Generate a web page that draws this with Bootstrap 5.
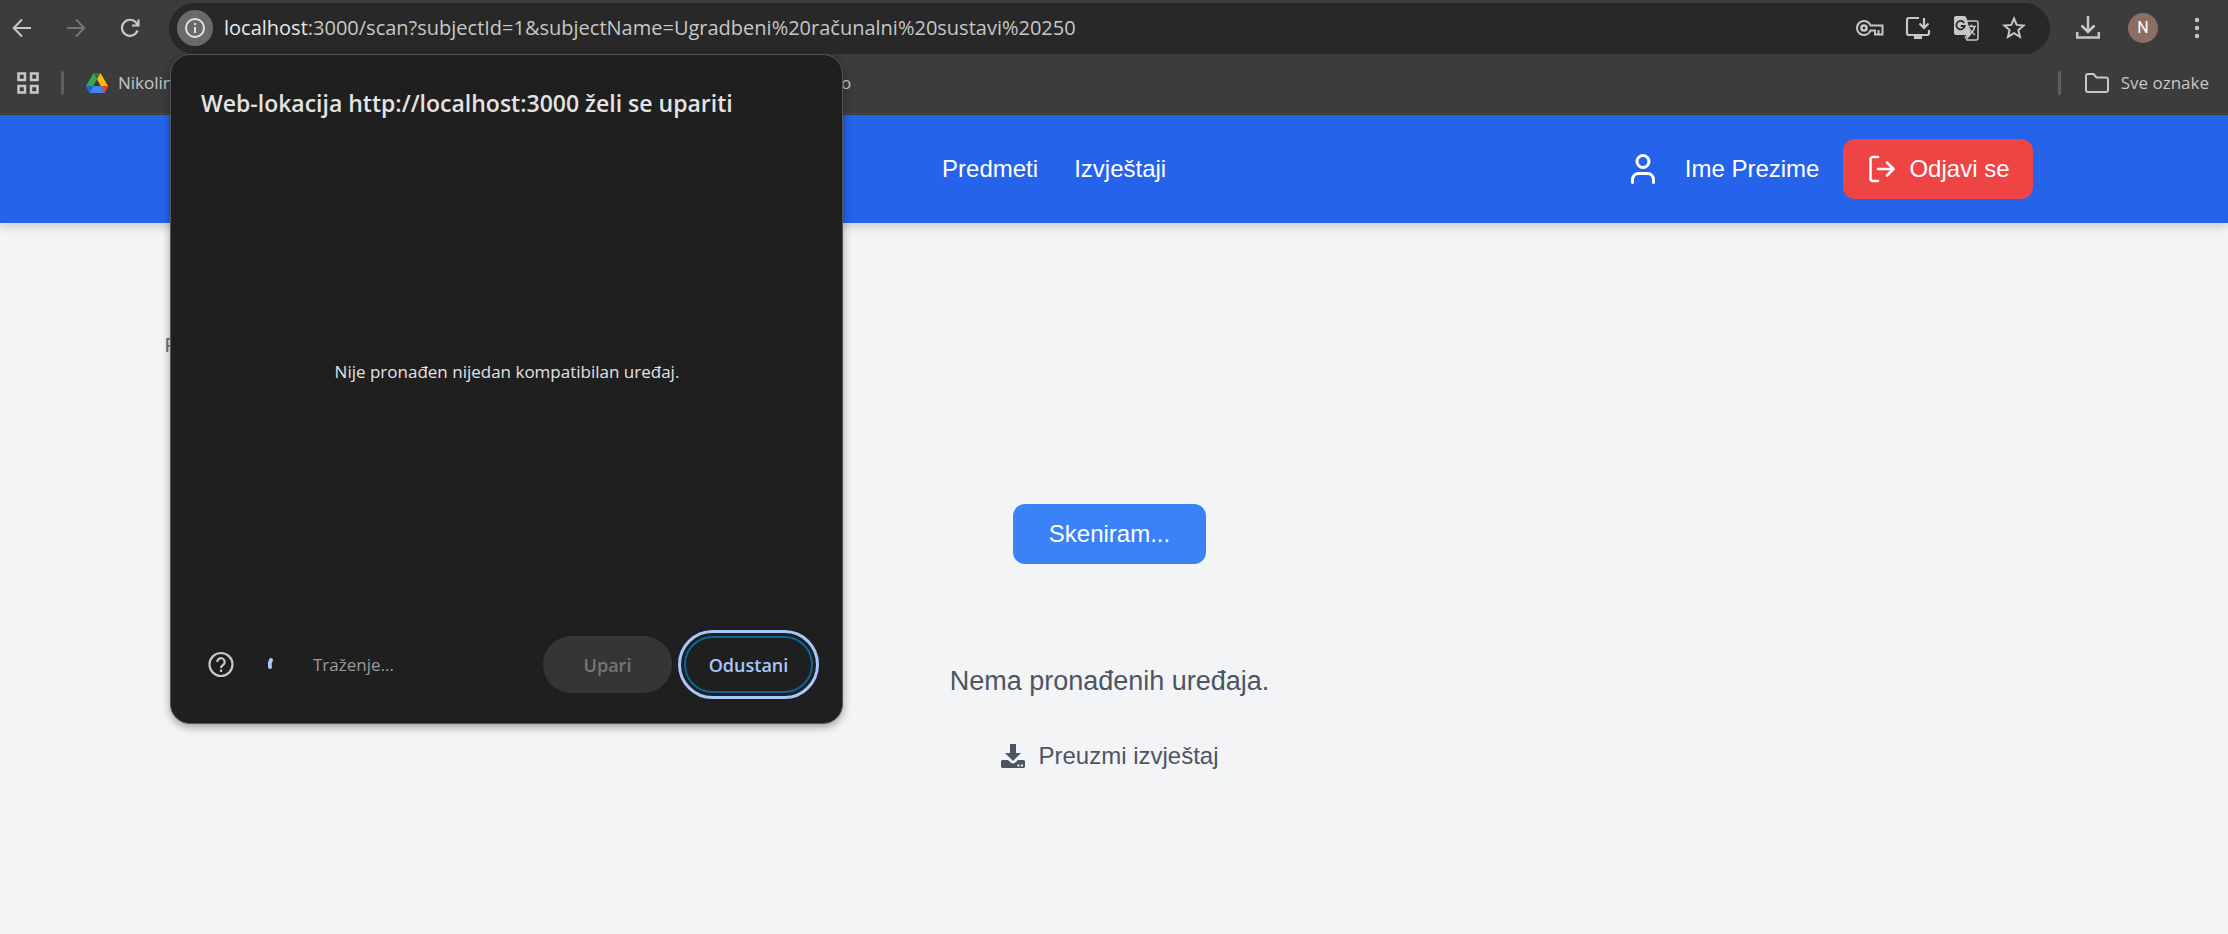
<!DOCTYPE html>
<html lang="hr">
<head>
<meta charset="utf-8">
<meta name="viewport" content="width=device-width, initial-scale=1">
<title>Skeniranje</title>
<link href="https://cdn.jsdelivr.net/npm/bootstrap@5.3.0/dist/css/bootstrap.min.css" rel="stylesheet">
<style>
body{background:#f3f4f6;font-family:"Liberation Sans",Arial,sans-serif;font-size:24px;line-height:36px;color:#4b5563;min-height:100vh}
svg{display:block;flex-shrink:0}
.chrome-ui{font-family:"Open Sans","Noto Sans",sans-serif;color:#c7c7c7;font-size:17px;line-height:24px}
.browser-top{background:#3c3c3c;height:115px;border-bottom:1px solid #3a3a3a;box-shadow:inset 0 -1px #4a4a4a}
.icon-btn{background:none;border:0;padding:0;color:#c7c7c7}
.icon-dim{color:#757575}
.toolbar-row{height:56px;padding:0 19px 0 10px}
.nav-tools{gap:30px;width:159px}
.end-tools{gap:27px;width:159px}
.address{background:#282828;border-radius:26px;height:51px;padding:0 22px 0 8px;gap:11px}
.info-dot{width:36px;height:36px;background:#6b6a68;color:#e3e3e3}
.url-box{color:#c7c7c7;font-size:20px;line-height:30px}
.url-host{color:#e8e8e8}
.avatar-dot{width:30px;height:30px;background:#8d6e63;color:#fff;font:16px/30px Roboto,sans-serif}
.marks-row{height:54px;padding:0 19px 0 16px}
.sep{width:3px;height:24px;border-radius:2px;background:#5e5e5e}
.mark-last{width:678px}
.chrome-ui a{color:inherit;text-decoration:none}
.site-head{background:#2563eb;height:108px;box-shadow:0 4px 9px rgba(0,0,0,.16);padding-right:9px}
.site-wrap{max-width:1920px;padding:0 36px}
.site-head a{color:#fff;text-decoration:none}
.brand-slot{width:298px}
.btn-out{background:#ef4444;color:#fff;border:0;border-radius:12px;height:60px;padding:0 24px;gap:12px;font-size:24px}
.site-main{padding:107px 9px 0 0}
.page-intro{max-width:1890px;height:174px}
.page-intro p{font-size:21px;line-height:30px;color:#6b7280}
.btn-scan{background:#3b82f6;color:#fff;border:0;border-radius:12px;height:60px;padding:0 36px;font-size:24px}
.none-found{font-size:27px;line-height:42px;margin:96px 0 36px}
.report-link{color:#4b5563;text-decoration:none;gap:12px}
.pair-box{position:absolute;left:170px;top:54px;width:673px;height:670px;background:#1f1f1f;border:1px solid #555;border-radius:20px;box-shadow:0 3px 8px rgba(0,0,0,.35);padding:31px 29px 30px 30px}
.pair-box h2{font-size:23px;line-height:34px;font-weight:600;color:#e3e3e3;margin:0}
.pair-body{padding-bottom:12px}
.pair-msg{color:#e3e3e3}
.search-note{color:#9a9a9a}
.pill{height:57px;width:129px;border-radius:29px;font-size:18px;font-weight:600;padding:0}
.pill-off{background:#353535;border:0;color:#757575}
.pill-on{background:#1f1f1f;border:2px solid #0a6494;color:#a8c7fa;outline:3px solid #a8c7fa;outline-offset:3px;margin-left:12px}
</style>
</head>
<body class="position-relative">
<div class="chrome-ui browser-top">
 <div class="toolbar-row d-flex align-items-center">
  <div class="nav-tools d-flex align-items-center">
   <button class="icon-btn" aria-label="Natrag"><svg width="24" height="24" viewBox="0 0 24 24" fill="none" stroke="currentColor" stroke-width="2"><path d="M21 12H4M12 3.500L3.700 12l8.300 8.500"/></svg></button>
   <button class="icon-btn icon-dim" aria-label="Naprijed"><svg width="24" height="24" viewBox="0 0 24 24" fill="none" stroke="currentColor" stroke-width="2"><path d="M3 12h17M12 3.500l8.300 8.500-8.300 8.500"/></svg></button>
   <button class="icon-btn" aria-label="Osvježi"><svg width="24" height="24" viewBox="0 0 24 24" fill="none" stroke="currentColor" stroke-width="2.200"><path d="M19.500 14.500A8 8 0 1 1 18 6.500l2 2.500M20.500 3.500V9.500H14"/></svg></button>
  </div>
  <div class="address d-flex align-items-center flex-grow-1">
   <button class="icon-btn info-dot rounded-circle d-flex align-items-center justify-content-center" aria-label="Informacije"><svg width="22" height="22" viewBox="0 0 22 22" fill="none" stroke="currentColor" stroke-width="2"><circle cx="11" cy="11" r="9"/><path d="M11 10v6M11 6v2"/></svg></button>
   <div class="url-box flex-grow-1" role="textbox" aria-label="Adresa"><span class="url-host">localhost</span>:3000/scan?subjectId=1&amp;subjectName=Ugradbeni%20računalni%20sustavi%20250</div>
   <div class="d-flex align-items-center" style="gap:20px">
    <button class="icon-btn" aria-label="Lozinke"><svg width="28" height="28" viewBox="0 0 28 28" fill="none" stroke="currentColor" stroke-width="2"><path d="M14.500 11.500A7 7 0 1 0 14.500 16.500H19V20.500H26.500V11.500ZM22.500 16v4"/><circle cx="8" cy="14" r="2.600" stroke-width="2.500"/></svg></button>
    <button class="icon-btn" aria-label="Instaliraj"><svg width="28" height="28" viewBox="0 0 28 28" fill="none" stroke="currentColor" stroke-width="2.200"><path d="M15 4H5a2 2 0 0 0-2 2v13a2 2 0 0 0 2 2h18a2 2 0 0 0 2-2v-3M20 4v10M15.500 9.500L20 14l4.500-4.500"/><path d="M10 21h8v4h-8z" fill="currentColor" stroke="none"/></svg></button>
    <button class="icon-btn" aria-label="Prevedi"><svg width="28" height="28" viewBox="0 0 28 28"><path d="M15 7h9q2 0 2 2v15q0 2-2 2h-9l-2-4" fill="none" stroke="currentColor" stroke-width="1.500"/><path d="M4 2h8q2 0 2.500 2L19 21H4q-2 0-2-2V4q0-2 2-2z" fill="currentColor"/><path d="M12.200 9A4.200 4.200 0 1 0 12.700 12H8.800" fill="none" stroke="#282828" stroke-width="1.800"/><path d="M15 12.500h9M19.500 10.500v2M22.500 13q-1 5-5.500 8M17 14q2 4 6 7" fill="none" stroke="currentColor" stroke-width="1.500"/><path d="M14 21h5l-4 4z" fill="currentColor"/></svg></button>
    <button class="icon-btn" aria-label="Označi"><svg width="28" height="28" viewBox="0 0 28 28" fill="none" stroke="currentColor" stroke-width="2"><path d="M14 4.500l2.700 6.400 6.900.6-5.200 4.500 1.600 6.800-6-3.600-6 3.600 1.600-6.800-5.200-4.500 6.900-.6z"/></svg></button>
   </div>
  </div>
  <div class="end-tools d-flex align-items-center justify-content-end">
   <button class="icon-btn" aria-label="Preuzimanja"><svg width="26" height="26" viewBox="0 0 26 26" fill="none" stroke="currentColor" stroke-width="2.500"><path d="M13 1v16M6.500 10.500L13 17l6.500-6.500M2.200 17v5.500h21.600V17"/></svg></button>
   <div class="avatar-dot rounded-circle text-center">N</div>
   <button class="icon-btn" aria-label="Izbornik"><svg width="24" height="24" viewBox="0 0 24 24" fill="currentColor"><circle cx="12" cy="4" r="2.200"/><circle cx="12" cy="12" r="2.200"/><circle cx="12" cy="20" r="2.200"/></svg></button>
  </div>
 </div>
 <div class="marks-row d-flex align-items-center">
  <button class="icon-btn" aria-label="Grupe"><svg width="24" height="24" viewBox="0 0 24 24" fill="none" stroke="currentColor" stroke-width="2.500"><path d="M2.500 2.500h6.500v6.500h-6.500zM15 2.500h6.500v6.500H15zM2.500 15h6.500v6.500h-6.500zM15 15h6.500v6.500H15z"/></svg></button>
  <div class="d-flex align-items-center" style="gap:22px;margin-left:21px">
   <span class="sep"></span>
   <a href="#" class="d-flex align-items-center text-nowrap" style="gap:10px"><svg width="22" height="20" viewBox="0 0 22 20"><path d="M7.500 0h7L11 6.200z" fill="#188038"/><path d="M7.500 0L11 6.200 3.700 19 0 13z" fill="#34a853"/><path d="M14.500 0L22 13h-7.200L11 6.200z" fill="#fbbc04"/><path d="M0 13h22l-3.700 7H3.700z" fill="#4285f4"/><path d="M0 13h7.300L3.700 20z" fill="#1967d2"/><path d="M14.800 13H22l-3.700 7z" fill="#ea4335"/></svg>Nikolin</a>
  </div>
  <a href="#" class="mark-last text-end">o</a>
  <div class="d-flex align-items-center ms-auto gap-4">
   <span class="sep"></span>
   <a href="#" class="d-flex align-items-center" style="gap:12px"><svg width="24" height="20" viewBox="0 0 24 20" fill="none" stroke="currentColor" stroke-width="2"><path d="M1 3q0-2 2-2h5.500l3 3.500H21q2 0 2 2V17q0 2-2 2H3q-2 0-2-2z"/></svg>Sve oznake</a>
  </div>
 </div>
</div>

<header class="site-head">
 <div class="site-wrap mx-auto h-100 d-flex align-items-center justify-content-between">
  <div class="brand-slot"></div>
  <nav class="d-flex" style="gap:36px"><a href="#">Predmeti</a><a href="#">Izvještaji</a></nav>
  <div class="d-flex align-items-center gap-4">
   <a href="#" class="d-flex align-items-center gap-4"><svg width="36" height="36" viewBox="0 0 24 24" fill="none" stroke="currentColor" stroke-width="2" stroke-linecap="round" stroke-linejoin="round"><path d="M19 21v-2a4 4 0 0 0-4-4H9a4 4 0 0 0-4 4v2"/><circle cx="12" cy="7" r="4"/></svg>Ime Prezime</a>
   <button class="btn-out d-flex align-items-center"><svg width="30" height="30" viewBox="0 0 30 30" fill="none" stroke="currentColor" stroke-width="2.500" stroke-linecap="round" stroke-linejoin="round"><path d="M11 3H6a2.500 2.500 0 0 0-2.500 2.500v19A2.500 2.500 0 0 0 6 27h5M11 15h15.500M20 8.500l6.500 6.500-6.500 6.500"/></svg>Odjavi se</button>
  </div>
 </div>
</header>

<main class="site-main">
 <div class="page-intro mx-auto"><p class="mb-0">P</p></div>
 <div class="d-flex flex-column align-items-center">
  <button class="btn-scan">Skeniram...</button>
  <p class="none-found">Nema pronađenih uređaja.</p>
  <a href="#" class="report-link d-flex align-items-center"><svg width="26" height="26" viewBox="0 0 26 26" fill="currentColor"><path d="M10 1h6v9h5l-8 8-8-8h5z"/><path fill-rule="evenodd" d="M2.500 17H8l3 2.700q2 1.500 4 0L18 17h5.500q1.500 0 1.500 1.500v5q0 1.500-1.500 1.500h-21Q1 25 1 23.500v-5Q1 17 2.500 17zM17.500 21.500v2h2v-2zM21 21.500v2h2v-2z"/></svg>Preuzmi izvještaj</a>
 </div>
</main>

<section class="pair-box chrome-ui d-flex flex-column" role="dialog" aria-labelledby="pair-title">
 <h2 id="pair-title">Web-lokacija http://localhost:3000 želi se upariti</h2>
 <div class="pair-body flex-grow-1 d-flex align-items-center justify-content-center"><p class="pair-msg mb-0">Nije pronađen nijedan kompatibilan uređaj.</p></div>
 <div class="d-flex align-items-center">
  <button class="icon-btn" aria-label="Pomoć" style="margin-left:6px"><svg width="28" height="28" viewBox="0 0 28 28" fill="none" stroke="currentColor" stroke-width="2.200"><circle cx="14" cy="13.500" r="11.500"/><path d="M10.300 11a3.700 3.700 0 1 1 5.700 3q-2 1.300-2 3M14 18.500v2.500"/></svg></button>
  <svg class="mx-4" width="30" height="28" viewBox="0 0 30 28" fill="none" stroke="#a8c7fa" stroke-width="4" stroke-linecap="round"><path d="M12 9q-2 3.500-1 7"/></svg>
  <span class="search-note">Traženje...</span>
  <button class="pill pill-off ms-auto" disabled>Upari</button>
  <button class="pill pill-on">Odustani</button>
 </div>
</section>
<script src="https://cdn.jsdelivr.net/npm/bootstrap@5.3.0/dist/js/bootstrap.bundle.min.js"></script>
</body>
</html>
